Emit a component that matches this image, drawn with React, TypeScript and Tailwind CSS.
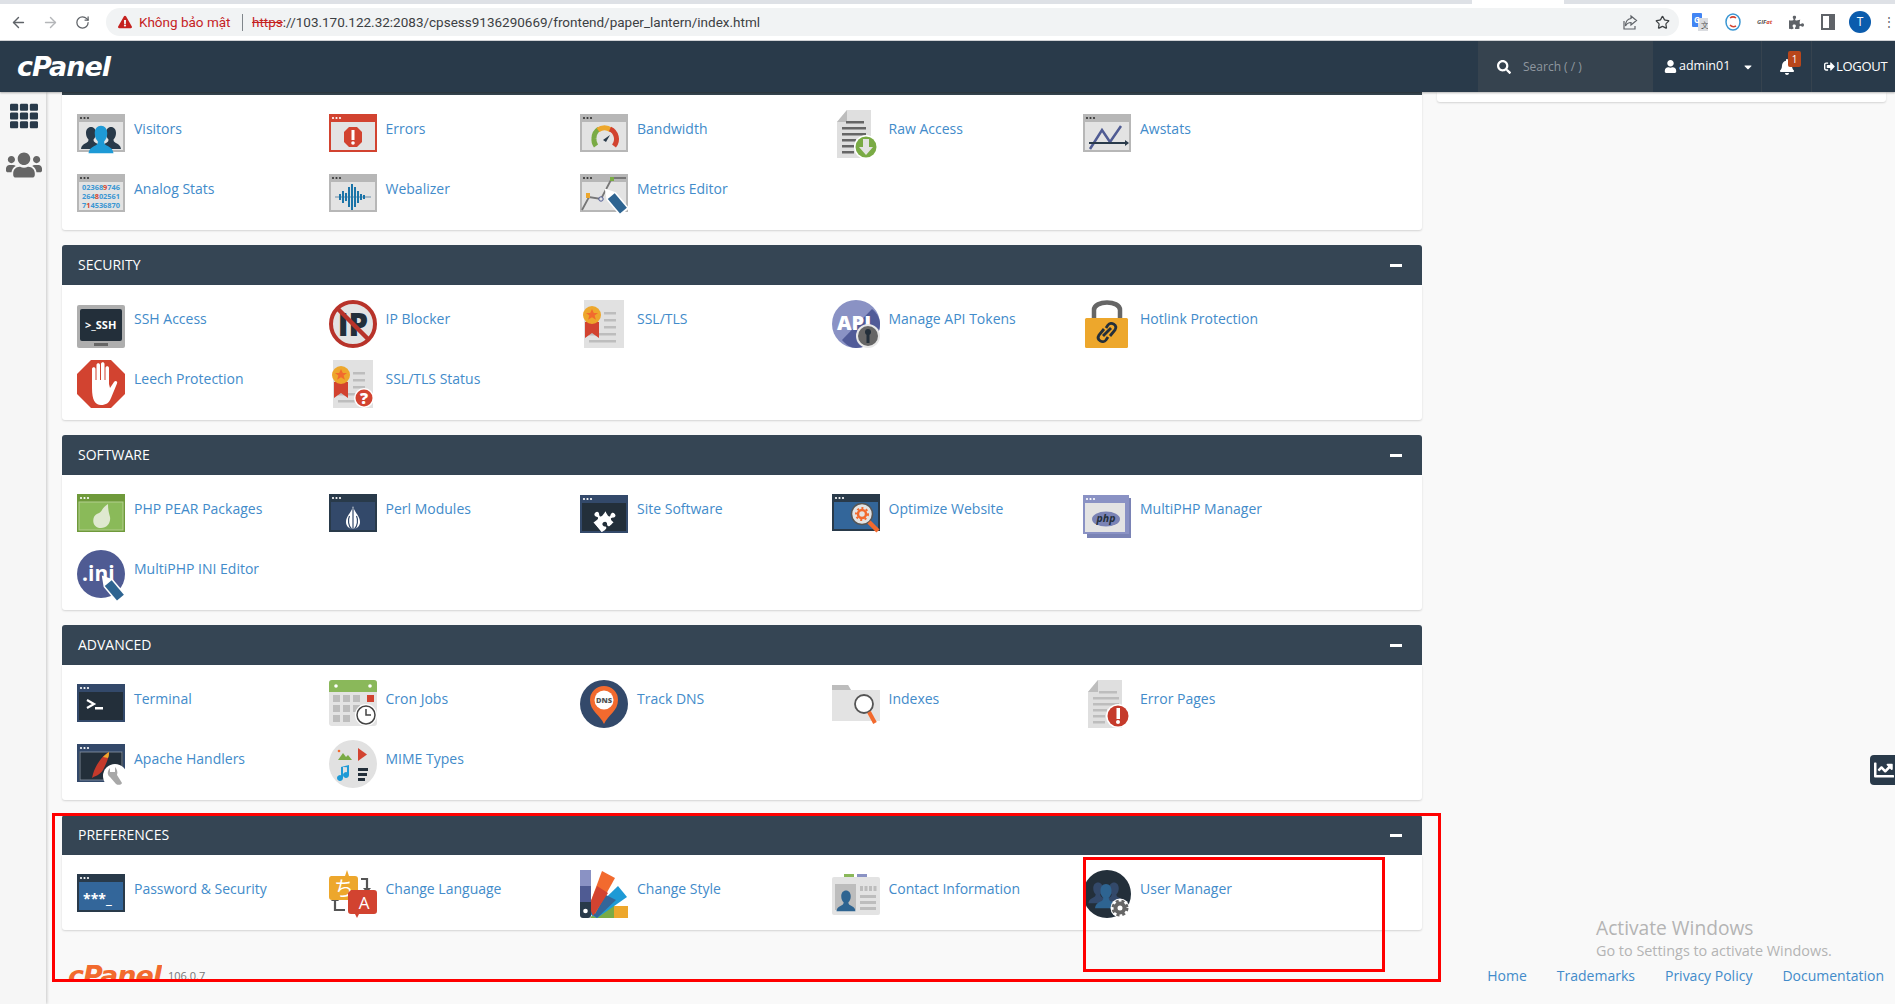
import { ReactNode } from 'react';
import { ArrowLeft, ArrowRight, RotateCw, Star } from 'lucide-react';
import { FaBell, FaCaretDown, FaChartLine, FaExclamationTriangle, FaPuzzlePiece, FaSearch, FaSignOutAlt, FaTh, FaUser, FaUsers } from 'react-icons/fa';

const font = { fontFamily: '"Open Sans", sans-serif' };
const logoFont = { fontFamily: '"DejaVu Sans", sans-serif' };

const Svg = ({ children }: { children: ReactNode }) => (
  <svg width="48" height="48" viewBox="0 0 48 48" className="block shrink-0 overflow-visible">{children}</svg>
);

const Win = ({ frame = '#b7b7b7', body = '#e3e3e3', dots = '#333', children, h = 38, y = 4 }: { frame?: string; body?: string; dots?: string; children?: ReactNode; h?: number; y?: number }) => (
  <Svg>
    <rect x="0" y={y} width="48" height={h} fill={frame} />
    <rect x="2" y={y + 8} width="44" height={h - 10} fill={body} />
    <circle cx="4" cy={y + 4} r="1.1" fill={dots} />
    <circle cx="7.5" cy={y + 4} r="1.1" fill={dots} />
    <circle cx="11" cy={y + 4} r="1.1" fill={dots} />
    {children}
  </Svg>
);

const Person = ({ x, y, s = 1, fill }: { x: number; y: number; s?: number; fill: string }) => (
  <path
    transform={`translate(${x} ${y}) scale(${s})`}
    fill={fill}
    d="M0 -9c-3 0-5 2.500-5 6 0 3 1 5 2.500 6.500 0 1.500-.5 2.500-2 3.200C-7 8-9.500 9-10 13h20c-.5-4-3-5-5.500-6.300-1.500-.7-2-1.700-2-3.200C4 2 5 0 5 -3c0-3.500-2-6-5-6z"
  />
);

const Doc = ({ children }: { children?: ReactNode }) => (
  <Svg>
    <path d="M5 12 15 0h24v48H5z" fill="#dfdfdf" />
    <path d="M5 12 15 0v12z" fill="#bdbdbd" />
    {children}
  </Svg>
);

const Rosette = () => (
  <>
    <path d="M5 22h14v16l-7-5-7 5z" fill="#d24330" />
    <circle cx="12" cy="15" r="9" fill="#eda72c" />
    <path d="m12 9 1.800 4h4.200l-3.400 2.600 1.300 4.200-3.900-2.500-3.900 2.500 1.300-4.200L6 13h4.200z" fill="#f26a2e" />
  </>
);

const CertLines = () => (
  <g fill="#bdbdbd">
    <rect x="24" y="12" width="12" height="2.500" />
    <rect x="24" y="19" width="12" height="2.500" />
    <rect x="24" y="26" width="12" height="2.500" />
    <rect x="9" y="33" width="27" height="2.500" />
    <rect x="9" y="40" width="27" height="2.500" />
  </g>
);

const Cert = ({ children }: { children?: ReactNode }) => (
  <Svg>
    <rect x="4" y="0" width="40" height="48" fill="#e1e1e1" />
    <CertLines />
    <Rosette />
    {children}
  </Svg>
);

const Pencil = ({ x, y }: { x: number; y: number }) => (
  <g transform={`translate(${x} ${y}) rotate(-40)`}>
    <path d="M-6 -9 0 -19 6 -9V12H-6z" fill="#fff" />
    <rect x="-4.500" y="-9" width="9" height="19" fill="#2e6491" />
  </g>
);

const Gear = ({ cx, cy, r }: { cx: number; cy: number; r: number }) => (
  <g>
    <circle cx={cx} cy={cy} r={r + 5} fill="#fff" />
    <circle cx={cx} cy={cy} r={r} fill="none" stroke="#666" strokeWidth="4" />
    <circle cx={cx} cy={cy} r={r + 2.500} fill="none" stroke="#666" strokeWidth="3" strokeDasharray="3 2.700" />
  </g>
);

const icons: Record<string, ReactNode> = {
  visitors: (
    <Win>
      <Person x={14} y={26} s={1} fill="#293a4a" />
      <Person x={34} y={26} s={1} fill="#293a4a" />
      <Person x={24} y={27} s={1.250} fill="#1e9ad6" />
    </Win>
  ),
  errors: (
    <Win frame="#d24330" dots="#fff">
      <path d="M20 17h8l5 5v10l-5 5h-8l-5-5V22z" fill="#d24330" />
      <rect x="22.500" y="20" width="3" height="10" fill="#fff" />
      <circle cx="24" cy="33" r="1.800" fill="#fff" />
    </Win>
  ),
  bandwidth: (
    <Win>
      <path d="M14 28a11 11 0 0 1 5-9" fill="none" stroke="#7aab45" strokeWidth="5" />
      <path d="M18 20a11 11 0 0 1 13 0" fill="none" stroke="#eda72c" strokeWidth="5" />
      <path d="M30 19a11 11 0 0 1 4 17" fill="none" stroke="#d24330" strokeWidth="5" />
      <path d="M14 28a11 11 0 0 0 2 8" fill="none" stroke="#7aab45" strokeWidth="5" />
      <path d="m23 30 7-5-4 7z" fill="#293a4a" />
    </Win>
  ),
  raw: (
    <Doc>
      <g fill="#666">
        <rect x="14" y="11" width="18" height="2.500" />
        <rect x="10" y="17" width="24" height="2.500" />
        <rect x="10" y="23" width="24" height="2.500" />
        <rect x="10" y="29" width="14" height="2.500" />
        <rect x="10" y="35" width="12" height="2.500" />
        <rect x="10" y="41" width="12" height="2.500" />
      </g>
      <circle cx="34" cy="37" r="12" fill="#fff" />
      <circle cx="34" cy="37" r="10.500" fill="#7aab45" />
      <path d="M31 29h6v8h4l-7 8-7-8h4z" fill="#e3e3e3" />
    </Doc>
  ),
  awstats: (
    <Win>
      <path d="m7 39 12-19 8 12 11-16" fill="none" stroke="#4f5b93" strokeWidth="2.500" />
      <path d="M6 33h36" stroke="#293a4a" strokeWidth="2" />
      <path d="m42 30 4 3-4 3z" fill="#293a4a" />
    </Win>
  ),
  analog: (
    <Win>
      <g fontSize="7.500" fontWeight="700" fill="#3b97d3" style={font}>
        <text x="5" y="20" textLength="38" lengthAdjust="spacingAndGlyphs">02368<tspan fill="#d24330">9</tspan>746</text>
        <text x="5" y="29" textLength="38" lengthAdjust="spacingAndGlyphs">264<tspan fill="#d24330">8</tspan>02561</text>
        <text x="5" y="38" textLength="38" lengthAdjust="spacingAndGlyphs">7<tspan fill="#d24330">1</tspan>4536870</text>
      </g>
    </Win>
  ),
  webalizer: (
    <Win>
      <path d="M6 27h36" stroke="#6b8ea8" strokeWidth="1.200" />
      <path d="M11 24v6M14 21v12M17 23v8M20 17v20M23 14v26M26 17v20M29 21v12M32 24v6M35 25v4" stroke="#1b74a8" strokeWidth="2" />
    </Win>
  ),
  metrics: (
    <Win>
      <path d="m2 40 7-13 12 2 11-21h14" fill="none" stroke="#777" strokeWidth="1.800" />
      <rect x="6" y="23" width="4" height="5" fill="#eda72c" />
      <circle cx="21" cy="29" r="2.200" fill="#e3e3e3" stroke="#4f5b93" />
      <rect x="30" y="7" width="4" height="4" fill="#7aab45" />
      <Pencil x={37} y={33} />
    </Win>
  ),
  ssh: (
    <Svg>
      <rect x="0" y="5" width="48" height="43" rx="2" fill="#aeaeae" />
      <rect x="3" y="9" width="42" height="32" rx="2" fill="#232f3a" />
      <rect x="17" y="43" width="14" height="3" fill="#666" />
      <text x="8" y="29" fontSize="11" fontWeight="700" fill="#fff" style={font}>{'>_SSH'}</text>
    </Svg>
  ),
  ip: (
    <Svg>
      <circle cx="24" cy="24" r="22" fill="#e3e3e3" stroke="#b8332a" strokeWidth="4" />
      <text x="24" y="36" textAnchor="middle" fontSize="31" fontWeight="800" fill="#232f3a" style={font}>IP</text>
      <path d="m9 9 30 30" stroke="#b8332a" strokeWidth="4.500" />
    </Svg>
  ),
  ssl: <Cert />,
  api: (
    <Svg>
      <circle cx="24" cy="24" r="24" fill="#8a92c4" />
      <path d="M10 40 40 9c5 4 8 9 8 15 0 13-11 24-24 24-5 0-10-3-14-8z" fill="#515b98" />
      <text x="5" y="30" fontSize="20" fontWeight="800" fill="#fff" style={font}>API</text>
      <circle cx="36" cy="36" r="12" fill="#e8e8e8" />
      <circle cx="36" cy="36" r="10" fill="#666" />
      <circle cx="36" cy="32" r="3" fill="#232f3a" />
      <rect x="34.500" y="33" width="3" height="10" fill="#232f3a" />
    </Svg>
  ),
  hotlink: (
    <Svg>
      <path d="M11 24V10c0-10 26-10 26 0v14" fill="none" stroke="#666" strokeWidth="4.500" />
      <rect x="2" y="18" width="43" height="30" rx="1.500" fill="#eda72c" />
      <path d="m21 29-5 6c-3 5 4 9 7 5l2-3M27 36l5-6c3-5-4-9-7-5l-2 3" fill="none" stroke="#232f3a" strokeWidth="2.800" />
      <path d="m20 36 8-8" stroke="#232f3a" strokeWidth="2.800" />
    </Svg>
  ),
  leech: (
    <Svg>
      <path d="M14 0h20l14 14v20L34 48H14L0 34V14z" fill="#d24330" />
      <path d="M15 28V9c0-2.500 3.500-2.500 3.500 0v11h1V5c0-2.500 3.500-2.500 3.500 0v15h1V4c0-2.500 3.500-2.500 3.500 0v16h1V8c0-2.500 3.500-2.500 3.500 0v16l1 4 4-6c1.500-2 4-.5 3 1.500L34 38c-2 5-5 7-10 7-6 0-9-5-9-17z" fill="#fff" />
    </Svg>
  ),
  sslstatus: (
    <Cert>
      <circle cx="35" cy="38" r="10" fill="#fff" />
      <circle cx="35" cy="38" r="8.500" fill="#d24330" />
      <text x="35" y="44" textAnchor="middle" fontSize="16" fontWeight="800" fill="#fff" style={font}>?</text>
    </Cert>
  ),
  pear: (
    <Win frame="#6f9a3b" body="#8aba59" dots="#fff">
      <rect x="2" y="12" width="44" height="28" fill="none" stroke="#b4d08f" strokeWidth="1" />
      <path d="M31 14c0 6 1 9 2 13 1 6-3 11-9 11-7 0-9-6-7-11 2-4 6-3 8-7 1-2 3-4 6-6z" fill="#dfe9d0" />
    </Win>
  ),
  perl: (
    <Win frame="#293a4a" body="#33496a" dots="#fff">
      <path d="M24 16c1 6 7 10 7 16 0 4-3 7-7 7s-7-3-7-7c0-6 6-10 7-16z" fill="#fff" />
      <path d="M24 18v21M20.500 26c-2 4-1 10 2 13M27.500 26c2 4 1 10-2 13" fill="none" stroke="#33496a" strokeWidth="1.200" />
    </Win>
  ),
  site: (
    <Win y={5} frame="#33496a" body="#232f3a" dots="#fff">
      <g transform="rotate(-40 24 28)">
        <FaPuzzlePiece x={13} y={17} size={22} color="#fff" />
      </g>
    </Win>
  ),
  optimize: (
    <Win h={37} frame="#293a4a" body="#33669a" dots="#fff">
      <circle cx="30" cy="24" r="10.500" fill="#e3e3e3" stroke="#555" strokeWidth="1.500" />
      <circle cx="30" cy="24" r="4" fill="none" stroke="#f26a2e" strokeWidth="2.500" />
      <circle cx="30" cy="24" r="6" fill="none" stroke="#f26a2e" strokeWidth="2" strokeDasharray="2 2.500" />
      <path d="m37 32 9 9" stroke="#f26a2e" strokeWidth="4.500" />
    </Win>
  ),
  multiphp: (
    <Svg>
      <rect x="4" y="8" width="44" height="40" fill="#7a83b5" />
      <rect x="0" y="5" width="46" height="39" fill="#8a92c4" />
      <rect x="2" y="13" width="40" height="29" fill="#e3e3e3" />
      <circle cx="4" cy="9" r="1.100" fill="#fff" />
      <circle cx="7.500" cy="9" r="1.100" fill="#fff" />
      <circle cx="11" cy="9" r="1.100" fill="#fff" />
      <ellipse cx="23" cy="29" rx="14" ry="7.500" fill="#7a83b5" />
      <text x="23" y="32" textAnchor="middle" fontSize="10.500" fontStyle="italic" fontWeight="700" fill="#232f3a" style={font}>php</text>
    </Svg>
  ),
  ini: (
    <Svg>
      <circle cx="24" cy="24" r="24" fill="#4f5b93" />
      <text x="5" y="31" fontSize="21" fontWeight="700" fill="#fff" style={font}>.ini</text>
      <Pencil x={37} y={40} />
    </Svg>
  ),
  terminal: (
    <Win frame="#33496a" body="#232f3a" dots="#fff">
      <path d="m10 20 7 4-7 4" fill="none" stroke="#fff" strokeWidth="2.200" />
      <rect x="18" y="27" width="8" height="2.500" fill="#fff" />
    </Win>
  ),
  cron: (
    <Svg>
      <rect x="0" y="0" width="48" height="46" rx="3" fill="#e3e3e3" />
      <path d="M0 12V3a3 3 0 0 1 3-3h42a3 3 0 0 1 3 3v9z" fill="#8ab85a" />
      <circle cx="7" cy="6" r="1.800" fill="#fff" />
      <circle cx="41" cy="6" r="1.800" fill="#fff" />
      <g fill="#bdbdbd">
        <rect x="4" y="15" width="7" height="7" />
        <rect x="14" y="15" width="7" height="7" />
        <rect x="24" y="15" width="7" height="7" />
        <rect x="4" y="25" width="7" height="7" />
        <rect x="14" y="25" width="7" height="7" />
        <rect x="24" y="25" width="7" height="7" />
        <rect x="4" y="35" width="7" height="7" />
        <rect x="14" y="35" width="7" height="7" />
      </g>
      <rect x="38" y="15" width="7" height="7" fill="#d24330" />
      <circle cx="37" cy="35" r="11" fill="#fff" />
      <circle cx="37" cy="35" r="9" fill="#fff" stroke="#444" strokeWidth="1.500" />
      <path d="M37 29v6h5" fill="none" stroke="#444" strokeWidth="1.500" />
    </Svg>
  ),
  dns: (
    <Svg>
      <circle cx="24" cy="24" r="24" fill="#33496a" />
      <path d="M24 44c-4-9-14-13-14-24a14 14 0 0 1 28 0c0 11-10 15-14 24z" fill="#f26a2e" />
      <circle cx="24" cy="20" r="9.500" fill="#fff" />
      <text x="24" y="23" textAnchor="middle" fontSize="7.500" fontWeight="800" fill="#555" style={font}>DNS</text>
    </Svg>
  ),
  indexes: (
    <Svg>
      <path d="M0 5h16l3 5h29v31H0z" fill="#e3e3e3" />
      <path d="M0 5h16l3 5H0z" fill="#bdbdbd" />
      <circle cx="32" cy="24" r="9" fill="#fff" stroke="#555" strokeWidth="1.800" />
      <path d="m37 32 6 11" stroke="#f26a2e" strokeWidth="4" />
    </Svg>
  ),
  errorpages: (
    <Doc>
      <g fill="#bdbdbd">
        <rect x="16" y="11" width="18" height="2.500" />
        <rect x="10" y="17" width="26" height="2.500" />
        <rect x="10" y="23" width="26" height="2.500" />
        <rect x="10" y="29" width="14" height="2.500" />
        <rect x="10" y="35" width="12" height="2.500" />
        <rect x="10" y="41" width="12" height="2.500" />
      </g>
      <circle cx="35" cy="36" r="12" fill="#fff" />
      <circle cx="35" cy="36" r="10.500" fill="#c53a2b" />
      <rect x="33.500" y="28" width="3.500" height="11" fill="#fff" />
      <circle cx="35" cy="42" r="2" fill="#fff" />
    </Doc>
  ),
  apache: (
    <Win frame="#33496a" body="#232f3a" dots="#fff">
      <rect x="3" y="12" width="42" height="28" fill="none" stroke="#8a97a8" strokeWidth="0.800" />
      <path d="M32 12c-6 3-13 12-16 22l-1 4c3-2 8-3 11-8 3-6 6-12 6-18z" fill="#c53a2b" />
      <path d="M32 12c-2 1-4 3-6 5l5 1c1-2 1-4 1-6z" fill="#eda72c" />
      <circle cx="38" cy="36" r="12" fill="#fff" />
      <path d="M33 28c-3 3-3 7 0 9l6 7c3 2 6 0 6-1l-5-8c1-3 0-6-2-8v5h-5z" fill="#a8a8a8" />
    </Win>
  ),
  mime: (
    <Svg>
      <circle cx="24" cy="24" r="24" fill="#e1e1e1" />
      <path d="m9 20 5-7 3 4 2-2 4 5z" fill="#7aab45" />
      <circle cx="10" cy="11" r="1.300" fill="#f26a2e" />
      <path d="M29 8v13l9-6.500z" fill="#d24330" />
      <path d="M14 27v11a3 3 0 1 1-2-2.800V27l8-2v10a3 3 0 1 1-2-2.800v-5z" fill="#1e9ad6" />
      <g fill="#232f3a">
        <rect x="29" y="28" width="10" height="3" />
        <rect x="29" y="33" width="9" height="3" />
        <rect x="29" y="38" width="7" height="3" />
      </g>
    </Svg>
  ),
  password: (
    <Win frame="#293a4a" body="#33669a" dots="#fff">
      <text x="6" y="34" fontSize="14" fontWeight="700" fill="#fff" style={font}>***_</text>
    </Win>
  ),
  language: (
    <Svg>
      <path d="M32 9h6v10" fill="none" stroke="#555" strokeWidth="2.200" />
      <path d="m34 18 4 5 4-5z" fill="#555" />
      <path d="M16 40H6V30" fill="none" stroke="#555" strokeWidth="2.200" />
      <path d="m2 31 4-5 4 5z" fill="#555" />
      <path d="M2 6h14l2-6 2 6h6a3 3 0 0 1 3 3v18a3 3 0 0 1-3 3H3a3 3 0 0 1-3-3V9a3 3 0 0 1 2-3z" fill="#eda72c" />
      <text x="15" y="26" textAnchor="middle" fontSize="20" fill="#fff" style={{ fontFamily: '"Noto Sans CJK JP", sans-serif' }}>ち</text>
      <path d="M22 20h23a3 3 0 0 1 3 3v18a3 3 0 0 1-3 3h-15l-2 4-2-4h-4a3 3 0 0 1-3-3V23z" fill="#d24330" />
      <text x="35" y="39" textAnchor="middle" fontSize="17" fill="#fff" style={font}>A</text>
    </Svg>
  ),
  style: (
    <Svg>
      <rect x="34" y="36" width="14" height="12" fill="#eda72c" />
      <path d="M10 48 20 36h14v12z" fill="#7aab45" />
      <path d="M9 44 38 16l9 11-30 21z" fill="#1e9ad6" />
      <path d="m9 42 15-18 12 6-19 18z" fill="#33669a" />
      <path d="m9 36 13-35 13 7-20 36z" fill="#f26a2e" />
      <path d="m9 36 8-20 11 7-15 23z" fill="#d24330" />
      <rect x="0" y="0" width="11" height="16" fill="#8a92c4" />
      <rect x="0" y="16" width="11" height="16" fill="#4f5b93" />
      <path d="M0 32h11v13a3 3 0 0 1-3 3H3a3 3 0 0 1-3-3z" fill="#293a4a" />
      <circle cx="5.500" cy="41" r="2.300" fill="#fff" />
    </Svg>
  ),
  contact: (
    <Svg>
      <rect x="12" y="4" width="10" height="6" fill="#8ab85a" />
      <rect x="25" y="4" width="10" height="6" fill="#8a92c4" />
      <rect x="0" y="7" width="48" height="38" rx="2" fill="#e3e3e3" />
      <rect x="3" y="14" width="21" height="26" fill="#bdbdbd" />
      <Person x={14} y={29} s={0.950} fill="#2e6491" />
      <g fill="#bdbdbd">
        <rect x="28" y="16" width="3" height="5" />
        <rect x="32.500" y="16" width="3" height="5" />
        <rect x="37" y="16" width="3" height="5" />
        <rect x="41.500" y="16" width="3" height="5" />
        <rect x="28" y="25" width="16" height="3" />
        <rect x="28" y="31" width="16" height="3" />
        <rect x="28" y="37" width="16" height="3" />
      </g>
    </Svg>
  ),
  usermgr: (
    <Svg>
      <circle cx="24" cy="24" r="24" fill="#232f3a" />
      <Person x={15} y={21} s={0.950} fill="#33496a" />
      <Person x={31} y={21} s={0.950} fill="#33496a" />
      <Person x={23} y={24} s={1.100} fill="#2e6491" />
      <Gear cx={37} cy={38} r={4.500} />
    </Svg>
  ),
};

type Item = [string, string];

const sections: { title: string; items: Item[] }[] = [
  {
    title: 'Security',
    items: [
      ['SSH Access', 'ssh'], ['IP Blocker', 'ip'], ['SSL/TLS', 'ssl'], ['Manage API Tokens', 'api'], ['Hotlink Protection', 'hotlink'],
      ['Leech Protection', 'leech'], ['SSL/TLS Status', 'sslstatus'],
    ],
  },
  {
    title: 'Software',
    items: [
      ['PHP PEAR Packages', 'pear'], ['Perl Modules', 'perl'], ['Site Software', 'site'], ['Optimize Website', 'optimize'], ['MultiPHP Manager', 'multiphp'],
      ['MultiPHP INI Editor', 'ini'],
    ],
  },
  {
    title: 'Advanced',
    items: [
      ['Terminal', 'terminal'], ['Cron Jobs', 'cron'], ['Track DNS', 'dns'], ['Indexes', 'indexes'], ['Error Pages', 'errorpages'],
      ['Apache Handlers', 'apache'], ['MIME Types', 'mime'],
    ],
  },
  {
    title: 'Preferences',
    items: [['Password & Security', 'password'], ['Change Language', 'language'], ['Change Style', 'style'], ['Contact Information', 'contact'], ['User Manager', 'usermgr']],
  },
];

const metrics: Item[] = [
  ['Visitors', 'visitors'], ['Errors', 'errors'], ['Bandwidth', 'bandwidth'], ['Raw Access', 'raw'], ['Awstats', 'awstats'],
  ['Analog Stats', 'analog'], ['Webalizer', 'webalizer'], ['Metrics Editor', 'metrics'],
];

const ItemGrid = ({ items }: { items: Item[] }) => (
  <div className="grid grid-cols-[repeat(5,251.5px)] pl-[15px] pt-[15px]">
    {items.map(([label, icon]) => (
      <a key={label} className="flex gap-[9px] mb-3 h-12">
        {icons[icon]}
        <span className="pt-[9px] text-sm leading-5 text-[#428bca] whitespace-nowrap">{label}</span>
      </a>
    ))}
  </div>
);

const cardClass = 'bg-white rounded-b-[3px] shadow-[0_1px_2px_rgba(0,0,0,0.15)]';

const App = () => (
  <div className="relative w-[1895px] h-[1004px] overflow-hidden bg-[#f9f9f9] flex flex-col" style={font}>
    {/* browser chrome */}
    <div className="h-1 bg-[#dee1e6] flex shrink-0">
      <div className="ml-[1472px] w-[92px] bg-white" />
    </div>
    <div className="h-[37px] shrink-0 bg-white border-b border-[#d5d7da] flex items-center pl-[9px] pr-0 text-[#5f6368]">
      <ArrowLeft size={17} className="ml-[1px]" />
      <ArrowRight size={17} className="ml-[15px] text-[#b4b6b9]" />
      <RotateCw size={15} className="ml-[16px]" />
      <div className="ml-[16px] w-[1575px] h-7 rounded-full bg-[#f1f3f4] flex items-center pl-[3px] text-[13.5px] whitespace-nowrap" style={{ fontFamily: '"Roboto", sans-serif' }}>
        <span className="ml-[9px] text-[#c5221f]"><FaExclamationTriangle size={14} /></span>
        <span className="ml-[7px] w-[103px] text-[#c5221f]">Không bảo mật</span>
        <span className="h-[17px] w-px bg-[#80868b]" />
        <span className="ml-[9px] text-[#c5221f] line-through">https</span>
        <span className="text-[#3c4043]">://103.170.122.32:2083/cpsess9136290669/frontend/paper_lantern/index.html</span>
        <svg width="15" height="16" viewBox="0 0 15 16" className="ml-[863px] shrink-0" fill="none" stroke="#5f6368" strokeWidth="1.200">
          <path d="M8 2 13.500 6.500 8 11V8.500C5 8.500 3.500 10 2.500 12c0-4 2-7 5.500-7.500z" />
          <path d="M1 7v8h11v-3" />
        </svg>
        <Star size={15} className="ml-[17px] shrink-0 text-[#3c4043]" />
      </div>
      <svg width="16" height="18" viewBox="0 0 16 18" className="ml-[13px] shrink-0">
        <rect x="0" y="0" width="10" height="14" rx="1" fill="#4285f4" />
        <rect x="6" y="5" width="10" height="13" fill="#dadce0" />
        <text x="2" y="10" fontSize="8" fontWeight="700" fill="#fff">G</text>
        <text x="9" y="15" fontSize="8" fill="#555">文</text>
      </svg>
      <svg width="16" height="18" viewBox="0 0 16 18" className="ml-[17px] shrink-0" fill="none">
        <ellipse cx="8" cy="9" rx="7" ry="8" stroke="#3b97d3" strokeWidth="1.500" />
        <path d="M5 5a5 5 0 0 1 6 0M11 13a5 5 0 0 1-6-1" stroke="#d24330" strokeWidth="1.500" />
      </svg>
      <span className="ml-[16px] w-[16px] shrink-0 text-[6px] font-bold italic text-[#555]">GIF<span className="text-[#d24330]">at</span></span>
      <FaPuzzlePiece size={15} className="ml-[16px] shrink-0" />
      <svg width="14" height="16" viewBox="0 0 14 16" className="ml-[17px] shrink-0">
        <path d="M0 0h14v16H0z" fill="#5f6368" />
        <path d="M2 2h6v12H2z" fill="#fff" />
      </svg>
      <span className="ml-[14px] w-[22px] h-[22px] rounded-full bg-[#0b5cad] text-white text-xs flex items-center justify-center shrink-0">T</span>
      <span className="ml-[12px] shrink-0 text-[#5f6368] text-xs leading-none">⋮</span>
    </div>

    {/* cpanel header */}
    <header className="relative z-10 h-[51px] shrink-0 bg-[#293a4a] flex items-stretch text-white shadow-[0_1px_2px_rgba(0,0,0,0.3)]">
      <div className="pl-[17px] flex items-center w-[1478px]">
        <span className="text-[27px] font-bold italic leading-none tracking-[-1px]" style={logoFont}>cPanel</span>
      </div>
      <div className="w-[175px] bg-[#36434f] flex items-center pl-[19px] border-r border-[#36434f]">
        <FaSearch size={14} />
        <span className="ml-[12px] text-xs text-[#8f979f]">Search ( / )</span>
      </div>
      <div className="w-[109px] flex items-center pl-[11px] border-r border-[#36434f] text-[12.5px]">
        <FaUser size={13} />
        <span className="ml-[2px]">admin01</span>
        <FaCaretDown size={12} className="ml-[12px]" />
      </div>
      <div className="relative w-[50px] flex items-center pl-[17px] border-r border-[#36434f]">
        <FaBell size={16} />
        <span className="absolute left-[26px] top-[10px] w-[13px] h-4 rounded-[2px] bg-[#b8461b] text-[10px] leading-4 text-center">1</span>
      </div>
      <div className="flex items-center pl-[12px] text-[13px]">
        <FaSignOutAlt size={11} />
        <span className="ml-[1px] tracking-[-0.3px]">LOGOUT</span>
      </div>
    </header>

    {/* page */}
    <div className="flex flex-1 min-h-0">
      <aside className="w-[46px] shrink-0 bg-[#f6f6f6] shadow-[1px_0_3px_rgba(0,0,0,0.2)] flex flex-col items-center pt-[10px] pl-[2px]">
        <FaTh size={28} className="text-[#293a4a]" />
        <FaUsers size={36} className="mt-[17px] text-[#666]" />
      </aside>
      <div className="flex-1 min-w-0 pl-4">
        <div className="flex items-start">
          <main className="w-[1360px] flex flex-col gap-[15px]">
            <div className={cardClass}>
              <div className="h-[3px] bg-[#36454f]" />
              <ItemGrid items={metrics} />
            </div>
            {sections.map((section) => (
              <section key={section.title}>
                <div className="h-10 bg-[#354554] rounded-t-[3px] flex items-center justify-between pl-[16px] pr-[20px] text-sm text-white uppercase">
                  <span>{section.title}</span>
                  <span className="w-[12px] h-[3px] bg-white" />
                </div>
                <div className={cardClass}>
                  <ItemGrid items={section.items} />
                </div>
              </section>
            ))}
          </main>
          <div className="ml-[15px] w-[449px] h-[10px] bg-white rounded-b-[3px] shadow-[0_1px_2px_rgba(0,0,0,0.15)]" />
        </div>
        <footer className="mt-[33px] flex justify-between items-start pr-[11px]">
          <div className="flex items-start pl-[6px]">
            <div className="h-[17px] w-[94px] overflow-hidden">
              <span className="block text-[27px] font-bold italic leading-[26px] text-[#f26a2e] tracking-[-1px]" style={logoFont}>cPanel</span>
            </div>
            <span className="ml-[6px] mt-[6px] text-[11px] leading-[14px] text-[#777]">106.0.7</span>
          </div>
          <nav className="mt-[3px] flex gap-[30px] text-sm leading-5 text-[#428bca]">
            <a>Home</a>
            <a>Trademarks</a>
            <a>Privacy Policy</a>
            <a>Documentation</a>
          </nav>
        </footer>
      </div>
    </div>

    {/* overlays */}
    <div className="absolute left-[1870px] top-[755px] w-[25px] h-[30px] bg-[#293a4a] rounded-l-[4px] flex items-center justify-end pr-[1px] text-white">
      <FaChartLine size={20} />
    </div>
    <div className="absolute left-[1596px] top-[916px] text-[#b4b4b4] pointer-events-none">
      <div className="text-[19.200px] leading-6">Activate Windows</div>
      <div className="text-[14.400px] leading-[18px] mt-[2px]">Go to Settings to activate Windows.</div>
    </div>
    <div className="absolute left-[52px] top-[813px] w-[1389px] h-[169px] border-[3px] border-[#f00] pointer-events-none" />
    <div className="absolute left-[1083px] top-[857px] w-[302px] h-[115px] border-[3px] border-[#f00] pointer-events-none" />
  </div>
);

export default App;
